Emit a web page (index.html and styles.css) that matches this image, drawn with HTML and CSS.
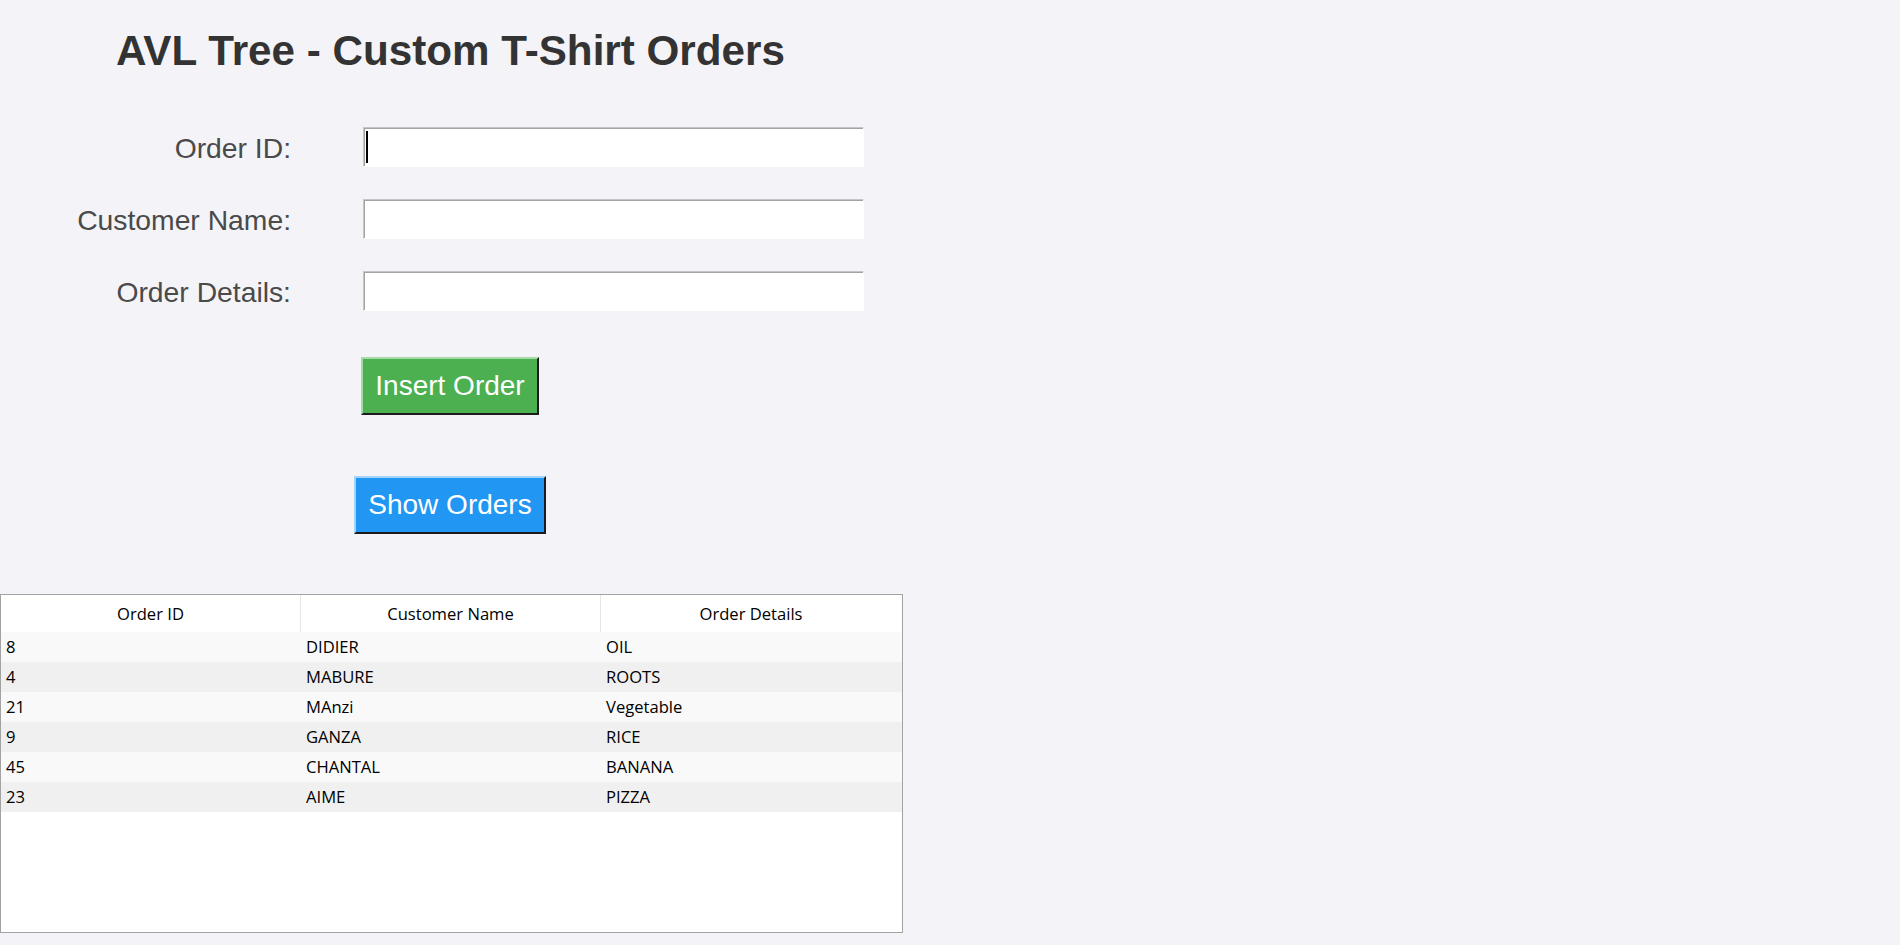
FILE: index.html
```html
<!DOCTYPE html>
<html lang="en">
<head>
<meta charset="utf-8">
<title>AVL Tree - Custom T-Shirt Orders</title>
<link rel="stylesheet" href="styles.css">
</head>
<body>
<main class="app">
  <h1 class="title">AVL Tree - Custom T-Shirt Orders</h1>

  <div class="form">
    <label class="label">Order ID:</label>
    <div class="entry" role="textbox"><span class="caret"></span></div>

    <label class="label">Customer Name:</label>
    <div class="entry" role="textbox"></div>

    <label class="label">Order Details:</label>
    <div class="entry" role="textbox"></div>
  </div>

  <div class="actions">
    <button class="btn btn-insert" type="button">Insert Order</button>
    <button class="btn btn-show" type="button">Show Orders</button>
  </div>

  <div class="tree">
    <div class="tree-head">
      <div class="th">Order ID</div>
      <div class="th">Customer Name</div>
      <div class="th">Order Details</div>
    </div>
    <div class="tree-row"><div class="td">8</div><div class="td">DIDIER</div><div class="td">OIL</div></div>
    <div class="tree-row"><div class="td">4</div><div class="td">MABURE</div><div class="td">ROOTS</div></div>
    <div class="tree-row"><div class="td">21</div><div class="td">MAnzi</div><div class="td">Vegetable</div></div>
    <div class="tree-row"><div class="td">9</div><div class="td">GANZA</div><div class="td">RICE</div></div>
    <div class="tree-row"><div class="td">45</div><div class="td">CHANTAL</div><div class="td">BANANA</div></div>
    <div class="tree-row"><div class="td">23</div><div class="td">AIME</div><div class="td">PIZZA</div></div>
  </div>
</main>
</body>
</html>
```

FILE: styles.css
```css
html, body {
  margin: 0;
  padding: 0;
  background: #f4f4f8;
}

body {
  font-family: "Liberation Sans", Arial, sans-serif;
  min-height: 945px;
}

.app {
  display: flex;
  flex-direction: column;
  align-items: flex-start;
  padding-top: 26px;
}

.title {
  margin: 0 0 0 116px;
  font-size: 42.2px;
  line-height: 50px;
  font-weight: 700;
  color: #333333;
}

.form {
  display: grid;
  grid-template-columns: 255px 501px;
  column-gap: 72px;
  row-gap: 32px;
  align-items: center;
  margin: 51px 0 0 36px;
}

.label {
  justify-self: end;
  font-size: 28.3px;
  line-height: 32px;
  padding-top: 1px;
  color: #4a4a4a;
}

.entry {
  box-sizing: border-box;
  height: 40px;
  background: #ffffff;
  border: 1px solid;
  border-color: #c6c6c6 #ffffff #ffffff #c6c6c6;
  box-shadow: inset 1px 1px 0 #a3a3a3;
  padding: 3px 2px;
  display: flex;
  align-items: flex-start;
}

.caret {
  width: 2px;
  height: 32px;
  background: #000000;
}

.actions {
  width: 828px;
  margin: 46px 0 0 36px;
  display: flex;
  flex-direction: column;
  align-items: center;
  gap: 61px;
}

.btn {
  font-family: "Liberation Sans", Arial, sans-serif;
  font-size: 28px;
  line-height: 32px;
  color: #ffffff;
  padding: 11px 12px;
  border: 2px solid;
  margin: 0;
  border-radius: 0;
}

.btn-insert {
  background: #4caf50;
  border-color: #a6dba8 #1c1c1c #1c1c1c #a6dba8;
}

.btn-show {
  background: #2196f3;
  border-color: #a3d3fa #1c1c1c #1c1c1c #a3d3fa;
}

.tree {
  box-sizing: border-box;
  width: 903px;
  height: 339px;
  margin-top: 60px;
  border: 1px solid #a2a2a2;
  background: #ffffff;
  font-family: "Open Sans", "Noto Sans", sans-serif;
  font-size: 16.6px;
  color: #000000;
}

.tree-head {
  display: grid;
  grid-template-columns: repeat(3, 300px);
  height: 37px;
  background: #ffffff;
}

.th {
  text-align: center;
  line-height: 37px;
  border-right: 1px solid #e6e6e6;
}

.th:last-child {
  border-right: none;
}

.tree-row {
  box-sizing: border-box;
  display: grid;
  grid-template-columns: repeat(3, 300px);
  height: 30px;
  line-height: 28px;
  padding-top: 1px;
  background: #f9f9f9;
}

.tree-row:nth-child(odd) {
  background: #f0f0f0;
}

.td {
  padding-left: 5px;
}
```
